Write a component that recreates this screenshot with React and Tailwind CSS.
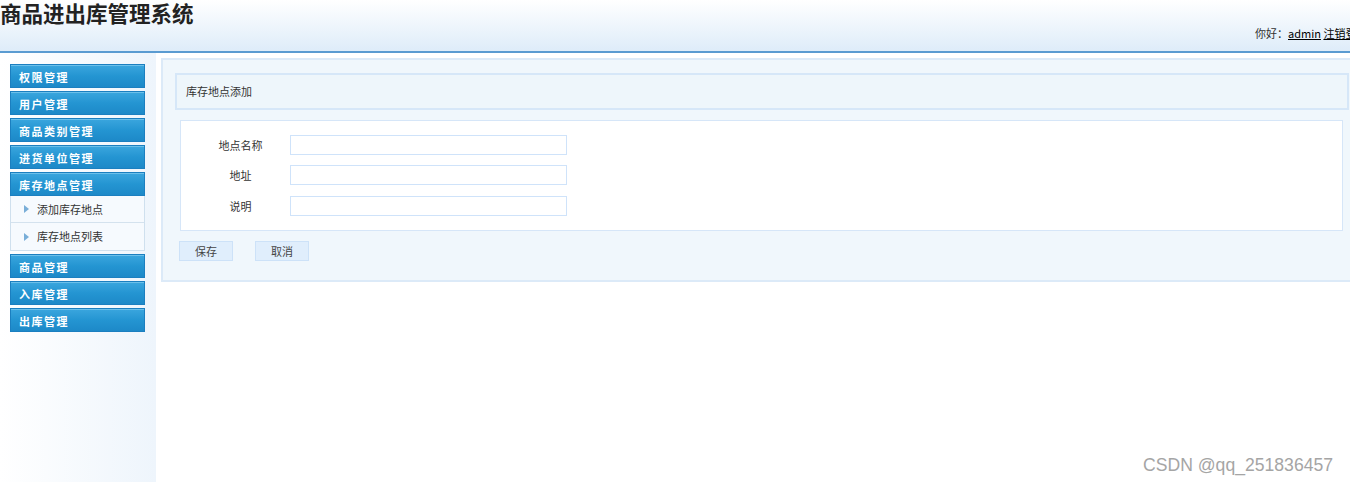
import React from 'react';

const font = { fontFamily: '"Noto Sans CJK SC", "Noto Sans", sans-serif' };

const menus = ['权限管理', '用户管理', '商品类别管理', '进货单位管理', '库存地点管理'];
const menusAfter = ['商品管理', '入库管理', '出库管理'];
const subItems = ['添加库存地点', '库存地点列表'];

const MenuHead = ({ label }) => (
    <div className="h-[24px] border border-[#1b7fc0] bg-gradient-to-b from-[#3aa6de] via-[#2495d2] to-[#1d89c8] shadow-[inset_0_1px_0_#6cc0ea] pl-[8px] pt-[2px] flex items-center text-white text-[11px] font-bold tracking-[1.5px] leading-none">
        {label}
    </div>
);

const App = () => {
    return (
        <div className="w-[1350px] h-[482px] bg-white relative overflow-hidden text-[#333]" style={font}>
            {/* header */}
            <div className="h-[53px] bg-gradient-to-b from-white to-[#deecf9] border-b-2 border-[#5a9bd1] relative">
                <div className="text-[21.5px] font-bold text-[#222] leading-[26px]">商品进出库管理系统</div>
                <div className="absolute left-[1255px] top-[25px] text-[11px] whitespace-nowrap text-[#333]">
                    你好：<span className="underline text-black">admin</span> <span className="underline text-black">注销登录</span>
                </div>
            </div>

            <div className="flex">
                {/* sidebar */}
                <div className="w-[156px] h-[429px] bg-gradient-to-r from-white to-[#eef5fc] pt-[11px] pl-[10px] pr-[11px]">
                    <div className="flex flex-col gap-[3px]">
                        {menus.map((m) => <MenuHead key={m} label={m} />)}
                    </div>
                    <div className="border border-t-0 border-[#cfe0ee] bg-[#f6fafe]">
                        {subItems.map((s, i) => (
                            <div key={s} className={`h-[27px] flex items-center pl-[13px] text-[11px] text-[#333] ${i === 0 ? 'border-b border-[#d4e2ee]' : ''}`}>
                                <svg width="5" height="8" viewBox="0 0 5 8" className="mr-[8px]">
                                    <path d="M0 0 L5 4 L0 8 Z" fill="#79aed8" />
                                </svg>
                                {s}
                            </div>
                        ))}
                    </div>
                    <div className="flex flex-col gap-[3px] mt-[3px]">
                        {menusAfter.map((m) => <MenuHead key={m} label={m} />)}
                    </div>
                </div>

                {/* main */}
                <div className="flex-1 pt-[5px] pl-[5px]">
                    <div className="h-[224px] bg-[#f0f7fc] border-2 border-r-0 border-[#dceaf8] pt-[13px] pl-[12px] pr-0">
                        <div className="h-[37px] mr-[1px] bg-[#eef6fb] border-2 border-[#d6e7f8] flex items-center pl-[9px] text-[11px] text-[#333]">
                            库存地点添加
                        </div>
                        <div className="mt-[10px] ml-[5px] mr-[7px] h-[111px] bg-white border border-[#d6e6f8] pt-[14px]">
                            {['地点名称', '地址', '说明'].map((l, i) => (
                                <div key={l} className={`flex items-center h-[20px] ${i === 1 ? 'mt-[10px]' : i === 2 ? 'mt-[11px]' : ''}`}>
                                    <div className="ml-[10px] w-[99px] text-center text-[11px]">{l}</div>
                                    <div className="w-[277px] h-[20px] border border-[#cfe3fa] bg-white" />
                                </div>
                            ))}
                        </div>
                        <div className="flex gap-[22px] mt-[10px] ml-[4px]">
                            <div className="w-[54px] h-[20px] bg-[#e0eefc] border border-[#cde2f8] flex items-center justify-center text-[11px] text-[#444]">保存</div>
                            <div className="w-[54px] h-[20px] bg-[#e0eefc] border border-[#cde2f8] flex items-center justify-center text-[11px] text-[#444]">取消</div>
                        </div>
                    </div>
                </div>
            </div>

            <div className="absolute left-[1143px] top-[452px] text-[17.6px] text-[#a5a5a5]" style={{ fontFamily: '"Liberation Sans", Arial, sans-serif' }}>
                CSDN @qq_251836457
            </div>
        </div>
    );
};

export default App;
